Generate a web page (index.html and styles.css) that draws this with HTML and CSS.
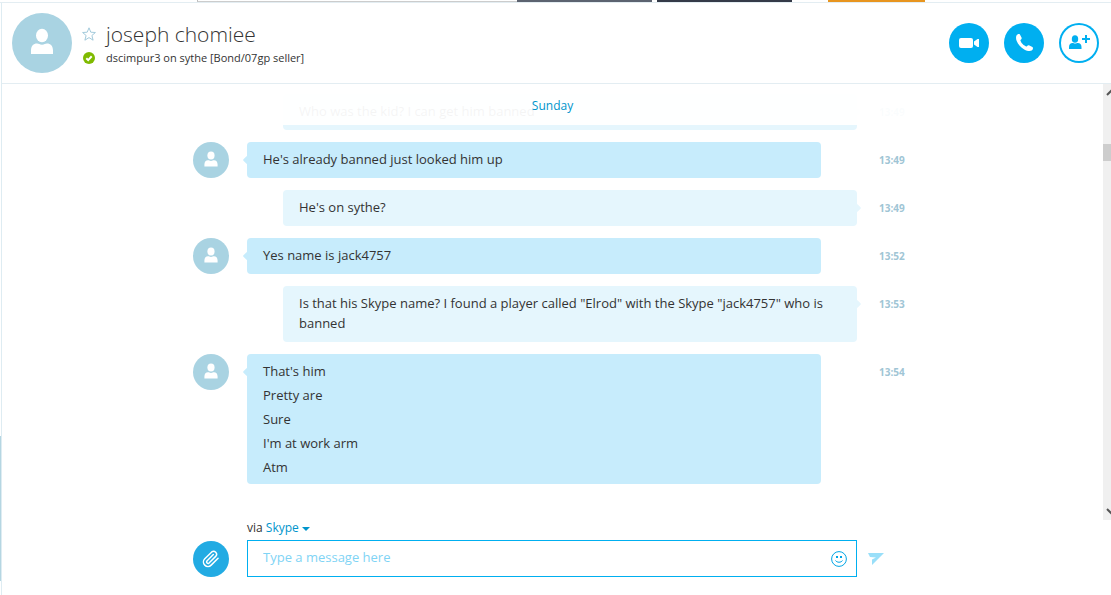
FILE: index.html
```html
<!DOCTYPE html>
<html lang="en">
<head>
  <meta charset="UTF-8">
  <title>joseph chomiee</title>
  <link rel="stylesheet" href="styles.css">
</head>
<body>
  <svg class="sprite" aria-hidden="true">
    <symbol id="person" viewBox="0 0 60 60">
      <ellipse cx="30" cy="22.500" rx="6" ry="6.800"/>
      <path d="M19 41v-3.500c0-4.500 2.500-7 6-7 2 0 2.500 1.200 5 1.200s3-1.200 5-1.200c3.500 0 6 2.500 6 7V41z"/>
    </symbol>
  </svg>

  <div class="top-strip">
    <span class="strip-tab"></span>
    <span class="strip-photo"></span>
    <span class="strip-photo strip-photo-dark"></span>
    <span class="strip-ad"></span>
  </div>

  <div class="window">
    <div class="side-edge"><span class="side-edge-thumb"></span></div>

    <main class="conversation">
      <header class="contact">
        <svg class="contact-avatar"><use href="#person"/></svg>
        <div class="contact-info">
          <div class="contact-row">
            <button type="button" class="favourite" aria-label="Add to favourites">
              <svg viewBox="0 0 14 14" width="14" height="14"><path d="M7 .800l1.800 4.400 4.600.300-3.500 3 1.200 4.700L7 10.600l-4.100 2.600 1.200-4.700-3.500-3 4.600-.300z"/></svg>
            </button>
            <h1 class="contact-name">joseph chomiee</h1>
          </div>
          <div class="contact-row">
            <svg class="presence" viewBox="0 0 12 12" width="12" height="12"><circle cx="6" cy="6" r="6"/><path d="M3.300 6.200l1.900 1.900 3.500-3.800"/></svg>
            <p class="contact-mood">dscimpur3 on sythe [Bond/07gp seller]</p>
          </div>
        </div>
        <div class="actions">
          <button type="button" class="action" aria-label="Video call">
            <svg viewBox="0 0 40 40"><rect x="10" y="15" width="14" height="10" rx="2"/><path d="M25 18.500l3.500-2.500H30v8h-1.500L25 21.500z"/></svg>
          </button>
          <button type="button" class="action" aria-label="Call">
            <svg viewBox="0 0 40 40"><path d="M12.500 12.500c.800-1.500 2.200-2 3.300-1.200l1.700 3.200c.500 1-.100 1.900-1.200 2.600.700 2.900 3.500 5.800 6.500 6.500.700-1.200 1.600-1.700 2.600-1.200l3 1.600c1 .700.700 2.600-.700 3.600-1.800 1-4.700.400-7.500-1.200-3.400-1.900-6.200-5-7.500-8.300-.800-2-.900-4.200-.200-5.600z"/></svg>
          </button>
          <button type="button" class="action action-outline" aria-label="Add people">
            <svg viewBox="0 0 40 40"><ellipse cx="16" cy="16" rx="3.200" ry="3.800"/><path d="M10 26v-2c0-2.500 1.500-4 3.500-4 1 0 1.500.600 2.700.600s1.600-.600 2.600-.600c2.200 0 3.700 1.500 3.700 4v2z"/><path d="M26 12h2v3h3v2h-3v3h-2v-3h-3v-2h3z"/></svg>
          </button>
        </div>
      </header>

      <section class="history">
        <div class="messages">
          <div class="date">Sunday</div>
          <div class="message mine">
            <div class="bubble"><p>Who was the kid? I can get him banned</p></div>
            <time>13:49</time>
          </div>
          <div class="message">
            <svg class="avatar"><use href="#person"/></svg>
            <div class="bubble"><p>He's already banned just looked him up</p></div>
            <time>13:49</time>
          </div>
          <div class="message mine">
            <div class="bubble"><p>He's on sythe?</p></div>
            <time>13:49</time>
          </div>
          <div class="message">
            <svg class="avatar"><use href="#person"/></svg>
            <div class="bubble"><p>Yes name is jack4757</p></div>
            <time>13:52</time>
          </div>
          <div class="message mine">
            <div class="bubble"><p>Is that his Skype name? I found a player called "Elrod" with the Skype "jack4757" who is banned</p></div>
            <time>13:53</time>
          </div>
          <div class="message">
            <svg class="avatar"><use href="#person"/></svg>
            <div class="bubble bubble-group">
              <p>That's him</p>
              <p>Pretty are</p>
              <p>Sure</p>
              <p>I'm at work arm</p>
              <p>Atm</p>
            </div>
            <time>13:54</time>
          </div>
        </div>
        <div class="scrollbar">
          <svg viewBox="0 0 8 8" width="8" height="8"><path d="M4 7l5-5"/></svg>
          <span class="scrollbar-thumb"></span>
          <svg viewBox="0 0 8 8" width="8" height="8"><path d="M4 1l5 5"/></svg>
        </div>
      </section>

      <form class="composer">
        <div class="via">via <button type="button" class="via-service">Skype <svg viewBox="0 0 8 4" width="8" height="4"><path d="M0 0h8L4 4z"/></svg></button></div>
        <button type="button" class="attach" aria-label="Attach a file">
          <svg viewBox="0 0 24 24"><path d="M21.400 11l-9.200 9.200a6 6 0 0 1-8.500-8.500L13 2.600a4 4 0 0 1 5.600 5.600l-9.200 9.200a2 2 0 0 1-2.800-2.800l8.500-8.500"/></svg>
        </button>
        <div class="field">
          <input type="text" aria-label="Message" placeholder="Type a message here">
          <button type="button" class="smiley" aria-label="Emoticons">
            <svg viewBox="0 0 16 16" width="16" height="16"><circle cx="8" cy="8" r="7.400"/><path d="M4.500 9.500c1.500 2.300 5.500 2.300 7 0"/><path class="eyes" d="M5 5h2v2H5zM9 5h2v2H9z"/></svg>
          </button>
        </div>
        <button type="submit" class="send" aria-label="Send">
          <svg viewBox="0 0 16 12" width="16" height="12"><path d="M0 0h16L4 12V6.500L8 4.500 2 4z"/></svg>
        </button>
      </form>
    </main>
  </div>
</body>
</html>
```
FILE: styles.css
```css
* { box-sizing: border-box; }
body {
  margin: 0;
  height: 100vh;
  display: flex;
  flex-direction: column;
  overflow: hidden;
  font-family: "Open Sans", "Noto Sans", sans-serif;
  font-size: 13px;
  line-height: 20px;
  color: #333;
  background: #fff;
}
h1, p { margin: 0; font-weight: normal; }
svg { display: block; }
button {
  padding: 0;
  border: none;
  background: none;
  font: inherit;
  cursor: pointer;
}
.sprite { position: absolute; width: 0; height: 0; }

/* bottom edge of whatever sits above the conversation */
.top-strip {
  display: grid;
  grid-template-columns: 320px 135px 5px 135px 36px 97px;
  flex: none;
  height: 3px;
  padding-left: 197px;
  border-bottom: 1px solid #e3edf2;
}
.top-strip span { height: 2px; }
.strip-tab { border-left: 1px solid #bbb; border-bottom: 1px solid #ccc; }
.strip-photo { background: #5c6370; }
.strip-photo-dark { grid-column: 4; background: #343a48; }
.strip-ad { grid-column: 6; background: #e8951f; }

.window { flex: 1; min-height: 0; display: flex; }
.side-edge {
  display: flex;
  flex-direction: column;
  justify-content: flex-end;
  width: 2px;
  padding-bottom: 14px;
  border-right: 1px solid #deecf2;
}
.side-edge-thumb { height: 145px; background: #b5d6e2; }
.conversation {
  flex: 1;
  min-width: 0;
  display: flex;
  flex-direction: column;
}

.contact {
  display: flex;
  flex: none;
  align-items: center;
  height: 81px;
  padding: 0 12px 0 10px;
  border-bottom: 1px solid #e3edf2;
}
.contact-avatar {
  width: 60px;
  height: 60px;
  border-radius: 50%;
  background: #a9d3e2;
  fill: #fff;
}
.contact-info { flex: 1; padding: 2px 0 0 10px; }
.contact-row { display: flex; align-items: center; gap: 10px; }
.favourite svg { fill: none; stroke: #a3cadb; }
.contact-name {
  font-size: 21px;
  font-weight: 300;
  line-height: 28px;
}
.presence { margin: 0 1px; fill: #7fba00; }
.presence path { fill: none; stroke: #fff; stroke-width: 2; }
.contact-mood { font-size: 11px; }
.actions { display: flex; gap: 15px; }
.action {
  width: 40px;
  height: 40px;
  border-radius: 50%;
  background: #00aff0;
  fill: #fff;
}
.action-outline {
  background: #fff;
  fill: #00aff0;
  box-shadow: inset 0 0 0 2px #00aff0;
}

.history {
  position: relative;
  flex: 1;
  min-height: 0;
  display: flex;
}
.messages {
  flex: 1;
  display: flex;
  flex-direction: column;
  align-items: center;
  gap: 12px;
  padding: 10px 1px 0 0;
  overflow: hidden;
}
.date {
  position: absolute;
  z-index: 1;
  top: 0;
  left: 0;
  right: 8px;
  height: 41px;
  padding-top: 12px;
  text-align: center;
  font-size: 12px;
  color: #0095cc;
  background: rgba(255, 255, 255, 0.95);
}
.message, .composer {
  display: grid;
  grid-template-columns: 54px 610px 54px;
}
.avatar {
  width: 36px;
  height: 36px;
  border-radius: 50%;
  background: #a9d3e2;
  fill: #fff;
}
.bubble {
  position: relative;
  grid-column: 2;
  display: flex;
  flex-direction: column;
  gap: 4px;
  margin-right: 36px;
  padding: 7px 16px 9px;
  border-radius: 4px;
  background: #c7ecfc;
}
.bubble-group { padding-bottom: 7px; }
.mine .bubble {
  margin-left: 36px;
  margin-right: 0;
  background: #e5f6fd;
}
.bubble::before {
  content: "";
  position: absolute;
  top: 15px;
  left: -3px;
  width: 6px;
  height: 6px;
  border-radius: 1px;
  background: inherit;
  transform: rotate(45deg);
}
.mine .bubble::before { left: auto; right: -3px; }
time {
  padding-left: 22px;
  font-size: 10px;
  font-weight: bold;
  line-height: 36px;
  color: #a0c5d5;
}

.scrollbar {
  display: flex;
  flex-direction: column;
  width: 8px;
  padding: 4px 0;
  background: #f0f0f0;
}
.scrollbar svg { fill: none; stroke: #555; stroke-width: 2; }
.scrollbar-thumb {
  height: 17px;
  margin-top: 48px;
  margin-bottom: auto;
  background: #cdcdcd;
}

.composer {
  flex: none;
  justify-content: center;
  align-items: center;
  padding: 0 9px 18px 0;
}
.via {
  grid-column: 2 / 4;
  height: 20px;
  font-size: 12px;
  line-height: 16px;
}
.via-service { color: #0095cc; }
.via-service svg { display: inline; vertical-align: middle; fill: currentColor; }
.attach {
  width: 36px;
  height: 36px;
  padding: 9px;
  border-radius: 50%;
  background: #22abe3;
}
.attach svg { fill: none; stroke: #fff; stroke-width: 2; stroke-linecap: round; }
.field {
  display: flex;
  align-items: center;
  height: 37px;
  border: 1px solid #00aff0;
}
.field input {
  flex: 1;
  height: 35px;
  padding: 0 15px 3px;
  border: none;
  outline: none;
  font: inherit;
  color: #333;
}
.field input::placeholder { color: #7fd4f5; }
.smiley { margin-right: 9px; }
.smiley svg { fill: none; stroke: #00a5e5; }
.smiley .eyes { fill: #00a5e5; stroke: none; }
.send { padding-left: 11px; fill: #99dff9; }
```
